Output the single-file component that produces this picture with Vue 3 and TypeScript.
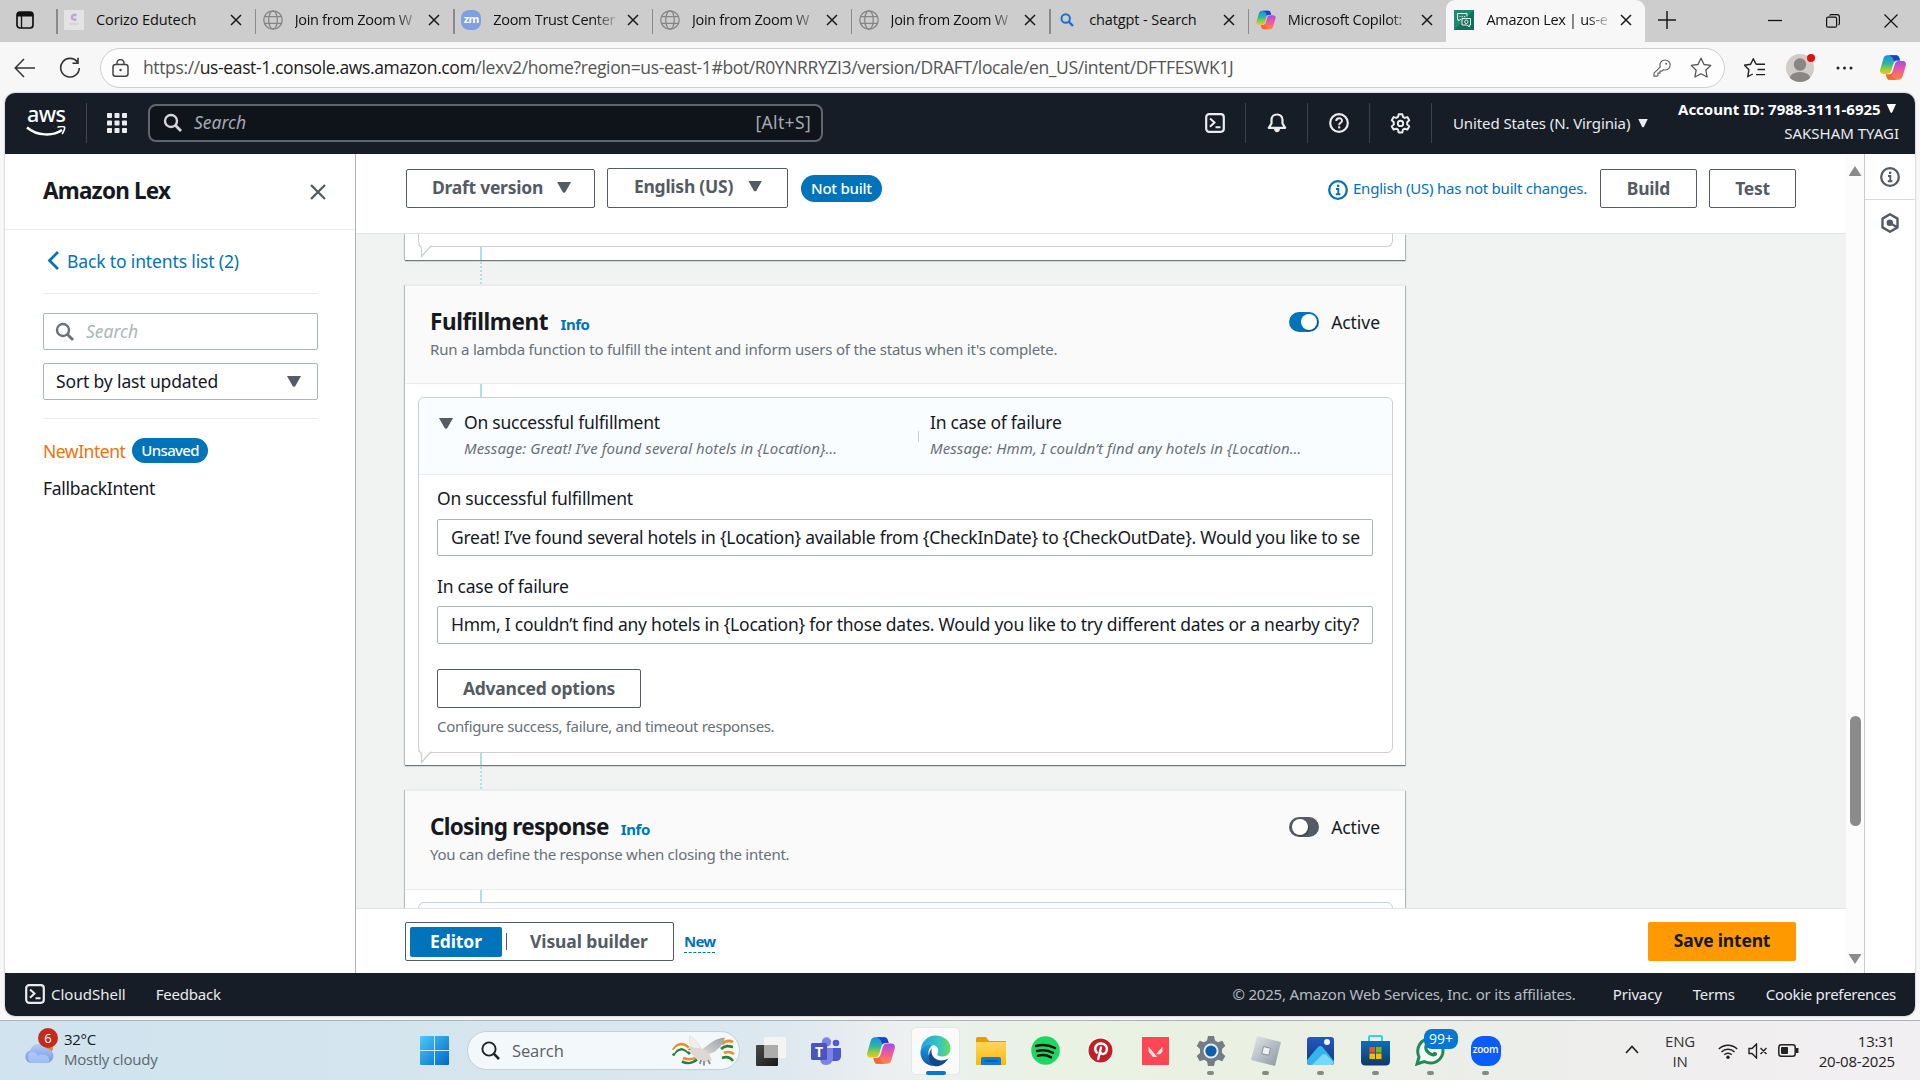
<script setup lang="ts">
interface Tab {
  title: string
  icon: 'corizo' | 'globe' | 'zm' | 'search' | 'copilot' | 'lex'
  fade?: boolean
  active?: boolean
}

const tabs: Tab[] = [
  { title: 'Corizo Edutech', icon: 'corizo' },
  { title: 'Join from Zoom W', icon: 'globe', fade: true },
  { title: 'Zoom Trust Center', icon: 'zm', fade: true },
  { title: 'Join from Zoom W', icon: 'globe', fade: true },
  { title: 'Join from Zoom W', icon: 'globe', fade: true },
  { title: 'chatgpt - Search', icon: 'search' },
  { title: 'Microsoft Copilot:', icon: 'copilot', fade: true },
  { title: 'Amazon Lex | us-e', icon: 'lex', fade: true, active: true },
]

const successText =
  'Great! I’ve found several hotels in {Location} available from {CheckInDate} to {CheckOutDate}. Would you like to se'
const failureText =
  'Hmm, I couldn’t find any hotels in {Location} for those dates. Would you like to try different dates or a nearby city?'

type App =
  | 'taskview' | 'teams' | 'copilot' | 'edge' | 'folder' | 'spotify' | 'pinterest'
  | 'valorant' | 'settings' | 'roblox' | 'photos' | 'store' | 'whatsapp' | 'zoom'

const apps: { id: App; state?: 'active' | 'running' }[] = [
  { id: 'taskview' },
  { id: 'teams' },
  { id: 'copilot' },
  { id: 'edge', state: 'active' },
  { id: 'folder' },
  { id: 'spotify' },
  { id: 'pinterest' },
  { id: 'valorant' },
  { id: 'settings', state: 'running' },
  { id: 'roblox', state: 'running' },
  { id: 'photos', state: 'running' },
  { id: 'store', state: 'running' },
  { id: 'whatsapp', state: 'running' },
  { id: 'zoom', state: 'running' },
]
</script>

<template>
  <div class="screen">
    <!-- shared gradients and symbols -->
    <svg class="defs" width="0" height="0">
      <defs>
        <linearGradient id="cpA" x1="0" y1="0" x2="0" y2="1">
          <stop offset="0" stop-color="#1a8fe8" /><stop offset=".45" stop-color="#2fb6a0" />
          <stop offset=".75" stop-color="#9ccc3c" /><stop offset="1" stop-color="#f5c518" />
        </linearGradient>
        <linearGradient id="cpB" x1="0" y1="0" x2="0" y2="1">
          <stop offset="0" stop-color="#a34fe8" /><stop offset=".5" stop-color="#ee5a9a" />
          <stop offset="1" stop-color="#ff8a3c" />
        </linearGradient>
        <linearGradient id="edgeA" x1="0" y1="0" x2="1" y2="0">
          <stop offset="0" stop-color="#1fa2e0" /><stop offset=".6" stop-color="#35c6c3" />
          <stop offset="1" stop-color="#66dd55" />
        </linearGradient>
        <linearGradient id="edgeB" x1="0" y1="0" x2="0" y2="1">
          <stop offset="0" stop-color="#1b9de2" /><stop offset="1" stop-color="#0c59a4" />
        </linearGradient>
        <linearGradient id="win" x1="0" y1="0" x2="1" y2="1">
          <stop offset="0" stop-color="#4cc9fa" /><stop offset="1" stop-color="#0067c8" />
        </linearGradient>
        <linearGradient id="cloud" x1="0" y1="0" x2="0" y2="1">
          <stop offset="0" stop-color="#b4cdf8" /><stop offset="1" stop-color="#6f9ae8" />
        </linearGradient>
        <linearGradient id="fold" x1="0" y1="0" x2="0" y2="1">
          <stop offset="0" stop-color="#ffd65c" /><stop offset="1" stop-color="#f8b90e" />
        </linearGradient>
        <linearGradient id="photo" x1="0" y1="0" x2="0" y2="1">
          <stop offset="0" stop-color="#2458c0" /><stop offset="1" stop-color="#103a82" />
        </linearGradient>
        <linearGradient id="storeG" x1="0" y1="0" x2="0" y2="1">
          <stop offset="0" stop-color="#0d6fb8" /><stop offset="1" stop-color="#12386b" />
        </linearGradient>
        <linearGradient id="silver" x1="0" y1="0" x2="1" y2="1">
          <stop offset="0" stop-color="#e4e8ec" /><stop offset="1" stop-color="#8b959f" />
        </linearGradient>
        <linearGradient id="dark" x1="0" y1="0" x2="1" y2="1">
          <stop offset="0" stop-color="#4a4a48" /><stop offset="1" stop-color="#191919" />
        </linearGradient>
        <linearGradient id="wing" x1="0" y1="1" x2="1" y2="0">
          <stop offset="0" stop-color="#e2ddd9" /><stop offset="1" stop-color="#9aa0aa" />
        </linearGradient>
        <symbol id="copilot" viewBox="0 0 28 28">
          <path d="M8.200 1.200h9.200c1.600 0 2.500 1 3 2.500l1 3.100h-3.300c-2 0-3 1-3.600 3l-2.300 7.600c-.7 2.300-2 3.400-4.200 3.400H4C1.500 20.800 0 19 .7 16.200L4 4.800C4.700 2.400 6 1.200 8.200 1.200z" fill="url(#cpA)" />
          <path d="M9 1.200h8.400c1.600 0 2.500 1 3 2.500l1 3.100h-3.300c-1.400 0-2.300.5-2.900 1.500C14.500 4.500 13 2 9 1.200z" fill="#1b44c4" />
          <path d="M19.800 26.800h-9.200c-1.600 0-2.500-1-3-2.500l-1-3.100h3.300c2 0 3-1 3.600-3l2.300-7.600c.7-2.300 2-3.400 4.200-3.400H24c2.500 0 4 1.800 3.300 4.600L24 23.200c-.7 2.400-2 3.600-4.200 3.600z" fill="url(#cpB)" />
          <path d="M19 26.800h-8.400c-1.600 0-2.500-1-3-2.500l-1-3.100h3.300c1.400 0 2.300-.5 2.900-1.500.7 3.800 2.200 6.300 6.200 7.100z" fill="#f46a32" />
        </symbol>
        <symbol id="globe" viewBox="0 0 20 20">
          <g fill="none" stroke="#858585" stroke-width="1.300">
            <circle cx="10" cy="10" r="9.200" /><ellipse cx="10" cy="10" rx="4.300" ry="9.200" />
            <path d="M1.500 6.700h17M1.500 13.300h17" />
          </g>
        </symbol>
        <symbol id="shell" viewBox="0 0 20 20">
          <rect x="1.200" y="1.200" width="17.600" height="17.600" rx="3" fill="none" stroke="currentColor" stroke-width="2.200" />
          <path d="M5 5.500l4.500 4-4.500 4.300M10.500 14.200h5" fill="none" stroke="currentColor" stroke-width="2" />
        </symbol>
        <symbol id="mag" viewBox="0 0 20 20">
          <circle cx="8" cy="8" r="6" fill="none" stroke="currentColor" stroke-width="2.400" />
          <path d="M12.300 12.300L18 18" stroke="currentColor" stroke-width="2.800" />
        </symbol>
        <symbol id="info" viewBox="0 0 20 20">
          <circle cx="10" cy="10" r="8.800" fill="none" stroke="currentColor" stroke-width="2.300" />
          <path d="M8 9h2.300v5M7.800 14.200h4.600" fill="none" stroke="currentColor" stroke-width="1.900" />
          <rect x="9" y="4.700" width="2.300" height="2.300" fill="currentColor" />
        </symbol>
        <symbol id="tail" viewBox="0 0 14 14">
          <path d="M0 0v4h14V0z" fill="#fff" />
          <path d="M.5 0C.5 1.500 3.500 2.500 3.500 4v8.500L12.500 2.500H14" fill="#fff" stroke="#ccd0d0" stroke-width="1.300" />
        </symbol>
      </defs>
    </svg>

    <!-- browser tabs -->
    <div class="tabbar">
      <div class="tab-actions">
        <svg width="18" height="18" viewBox="0 0 18 18"><rect x="1" y="1" width="16" height="16" rx="3" fill="none" stroke="#111" stroke-width="1.700" /><path d="M1 3.500C1 1.500 2 1 4 1h10c2 0 3 1 3 2.500V5.500H1z" fill="#111" /><path d="M5.500 5v12" stroke="#111" stroke-width="1.300" /></svg>
      </div>
      <div v-for="(tab, i) in tabs" :key="i" class="tab" :class="{ active: tab.active }">
        <span class="favicon">
          <svg v-if="tab.icon === 'corizo'" width="20" height="20"><rect width="20" height="20" fill="#e3e3e3" /><path d="M12.500 5.500c-2.500-1.500-5 0-4.500 2.300S10 9.800 12.500 9.500" fill="none" stroke="#b9a6d6" stroke-width="2.500" /><path d="M5 14h10" stroke="#c9c3d2" /></svg>
          <svg v-else-if="tab.icon === 'globe'" width="20" height="20"><use href="#globe" /></svg>
          <span v-else-if="tab.icon === 'zm'" class="zm">zm</span>
          <svg v-else-if="tab.icon === 'search'" width="14" height="14" viewBox="0 0 14 14"><circle cx="5.700" cy="5.500" r="4.200" fill="none" stroke="#1672d0" stroke-width="2" /><path d="M8.700 8.700L13 13" stroke="#1672d0" stroke-width="2.400" /></svg>
          <svg v-else-if="tab.icon === 'copilot'" width="20" height="20"><use href="#copilot" /></svg>
          <svg v-else width="20" height="20"><rect width="20" height="20" fill="#1f8a70" /><path d="M0 20L20 0v20z" fill="#12705a" /><g fill="none" stroke="#e8f5f1" stroke-width="1"><path d="M7 9.500H6L4.500 11V9.500h-1v-6h9.500v3" /><path d="M5.500 6.500h1M7.800 6.500h1M10 6.500h1" /><path d="M8 8.500h8.500v6.500H15.200v2l-2-2H8z" /><circle cx="12.300" cy="11.800" r="1.700" /></g></svg>
        </span>
        <span class="tab-title" :class="{ fade: tab.fade }">{{ tab.title }}</span>
        <svg class="tab-close" width="12" height="12" viewBox="0 0 12 12"><path d="M1 1l10 10M11 1L1 11" stroke="#1a1a1a" stroke-width="1.500" /></svg>
      </div>
      <svg class="new-tab" width="18" height="18" viewBox="0 0 18 18"><path d="M9 0v18M0 9h18" stroke="#1a1a1a" stroke-width="1.500" /></svg>
      <div class="win-controls">
        <svg width="14" height="14" viewBox="0 0 14 14"><path d="M0 6.500h14" stroke="#111" stroke-width="1.300" /></svg>
        <svg width="14" height="14" viewBox="0 0 14 14"><rect x=".6" y="3.200" width="10" height="10" rx="1.500" fill="none" stroke="#111" stroke-width="1.200" /><path d="M3.500 1.500C4 .8 4.600.6 5.500.6H11c1.500 0 2.400 1 2.400 2.400V9c0 .9-.2 1.500-.9 2" fill="none" stroke="#111" stroke-width="1.200" /></svg>
        <svg width="14" height="14" viewBox="0 0 14 14"><path d="M.5.5l13 13M13.500.5l-13 13" stroke="#111" stroke-width="1.200" /></svg>
      </div>
    </div>

    <!-- address bar -->
    <div class="toolbar">
      <svg class="back" width="22" height="20" viewBox="0 0 22 20"><path d="M21 10H1.500M10 1L1.200 10l8.800 9" fill="none" stroke="#333" stroke-width="1.500" /></svg>
      <svg class="reload" width="22" height="22" viewBox="0 0 22 22"><path d="M18.500 5.200A9.300 9.300 0 1 0 20.300 11M19 .8v5.400h-5.500" fill="none" stroke="#333" stroke-width="1.600" /></svg>
      <div class="address">
        <svg class="lock" width="17" height="18" viewBox="0 0 17 18"><rect x="1" y="5.500" width="15" height="11.700" rx="2.500" fill="none" stroke="#444" stroke-width="1.500" /><path d="M5 5.500V4a3.500 3.500 0 0 1 7 0v1.500" fill="none" stroke="#444" stroke-width="1.500" /><circle cx="8.500" cy="11" r="1.200" fill="#444" /></svg>
        <span class="url">https://<b>us-east-1.console.aws.amazon.com</b>/lexv2/home?region=us-east-1#bot/R0YNRRYZI3/version/DRAFT/locale/en_US/intent/DFTFESWK1J</span>
        <svg class="key" width="18" height="18" viewBox="0 0 18 18"><path d="M12 1a5 5 0 1 1-1.600 9.700L8.800 12.200H7v2H5v2L4 17.200H1v-3l6.300-6.400A5 5 0 0 1 12 1z" fill="none" stroke="#666" stroke-width="1.200" /><circle cx="13.200" cy="4.800" r="1" fill="#666" /></svg>
        <svg class="star" width="22" height="21" viewBox="0 0 22 21"><path d="M11 1.200l3 6.300 6.800.9-5 4.800 1.300 6.800-6.100-3.300L4.900 20l1.300-6.800-5-4.800 6.800-.9z" fill="none" stroke="#555" stroke-width="1.300" stroke-linejoin="round" /></svg>
      </div>
      <svg class="favs" width="22" height="20" viewBox="0 0 22 20"><path d="M12.200 6.300L9.300.9 6.500 6.300l-6 .9 4.400 4.500L3.800 18.600l5-2.600M12.200 6.300h8.800M13.500 11.500H21M12 16.600h9" fill="none" stroke="#222" stroke-width="1.400" /></svg>
      <div class="avatar">
        <svg width="28" height="28" viewBox="0 0 28 28"><clipPath id="av"><circle cx="14" cy="14" r="14" /></clipPath><g clip-path="url(#av)"><rect width="28" height="28" fill="#cfccc9" /><circle cx="14" cy="10.500" r="6.200" fill="#8a8683" /><ellipse cx="14" cy="24" rx="10.200" ry="6" fill="#8a8683" /></g></svg>
        <i class="alert" />
      </div>
      <svg class="more" width="17" height="4" viewBox="0 0 17 4"><g fill="#222"><circle cx="2" cy="2" r="1.500" /><circle cx="8.500" cy="2" r="1.500" /><circle cx="15" cy="2" r="1.500" /></g></svg>
      <svg class="cp" width="28" height="27"><use href="#copilot" /></svg>
    </div>

    <!-- console page -->
    <div class="page">
      <header class="nav">
        <div class="aws">
          <span>aws</span>
          <svg width="40" height="12" viewBox="0 0 40 12"><path d="M1 1.500C11 10 27 10.500 36 4" fill="none" stroke="#fff" stroke-width="2.400" /><path d="M31.500 1.200c3-.9 6.500-.8 7 0s-.5 4.500-2.500 6.800" fill="none" stroke="#fff" stroke-width="1.600" /></svg>
        </div>
        <svg class="grid" width="20" height="20" viewBox="0 0 20 20"><g fill="#ebebf0"><template v-for="r in 3" :key="r"><rect v-for="c in 3" :key="c" :x="(c - 1) * 7.5" :y="(r - 1) * 7.5" width="5" height="5" rx=".8" /></template></g></svg>
        <div class="nav-search">
          <svg width="20" height="20"><use href="#mag" /></svg>
          <em>Search</em>
          <span class="kbd">[Alt+S]</span>
        </div>
        <div class="nav-icons">
          <span><svg width="20" height="20"><use href="#shell" /></svg></span>
          <span><svg width="20" height="20" viewBox="0 0 20 20"><path d="M10 1.500c-3.500 0-5.500 2.400-5.500 5.500v3.500L1.800 14.800h16.400L15.500 10.500V7c0-3.100-2-5.500-5.500-5.500z" fill="none" stroke="currentColor" stroke-width="2.200" stroke-linejoin="round" /><path d="M7 15.500c0 5 6 5 6 0z" fill="currentColor" /></svg></span>
          <span><svg width="20" height="20" viewBox="0 0 20 20"><circle cx="10" cy="10" r="8.800" fill="none" stroke="currentColor" stroke-width="2.200" /><path d="M7.200 8c0-3.800 5.800-3.500 5.800-.3 0 2.200-2.900 2-2.900 4.500" fill="none" stroke="currentColor" stroke-width="1.900" /><rect x="9.100" y="13.300" width="2.100" height="2.100" fill="currentColor" /></svg></span>
          <span><svg width="21" height="21" viewBox="0 0 21 21"><path d="M8.700 1.200h3.600l.7 2.700 1.700 1 2.700-.8 1.800 3.100-2 2v2.200l2 2-1.800 3.100-2.700-.8-1.700 1-.7 2.700H8.700L8 16.700l-1.700-1-2.700.8-1.800-3.100 2-2V9.200l-2-2 1.800-3.100 2.700.8 1.700-1z" fill="none" stroke="currentColor" stroke-width="2" stroke-linejoin="round" /><circle cx="10.500" cy="10.400" r="2.700" fill="none" stroke="currentColor" stroke-width="1.900" /></svg></span>
        </div>
        <div class="region">United States (N. Virginia)<i class="tri" /></div>
        <div class="account">
          <div class="acc-id">Account ID: 7988-3111-6925<i class="tri" /></div>
          <div class="acc-name">SAKSHAM TYAGI</div>
        </div>
      </header>

      <div class="body">
        <aside class="side">
          <div class="side-head">
            <h2>Amazon Lex</h2>
            <svg width="16" height="16" viewBox="0 0 16 16"><path d="M1 1l14 14M15 1L1 15" stroke="#545b64" stroke-width="2.300" /></svg>
          </div>
          <div class="side-body">
            <a class="backlink"><svg width="11" height="19" viewBox="0 0 11 19"><path d="M10 1L1.500 9.500 10 18" fill="none" stroke="#0073bb" stroke-width="2.700" /></svg>Back to intents list (2)</a>
            <div class="field"><svg width="20" height="20"><use href="#mag" /></svg><em>Search</em></div>
            <div class="field select"><span>Sort by last updated</span><i class="tri" /></div>
            <div class="intents">
              <div class="intent current">NewIntent<span class="badge">Unsaved</span></div>
              <div class="intent">FallbackIntent</div>
            </div>
          </div>
        </aside>

        <main class="main">
          <div class="topbar">
            <button class="btn draft">Draft version<i class="tri" /></button>
            <button class="btn lang">English (US)<i class="tri" /></button>
            <span class="badge built">Not built</span>
            <span class="notice"><svg width="20" height="20"><use href="#info" /></svg>English (US) has not built changes.</span>
            <button class="btn build">Build</button>
            <button class="btn test">Test</button>
          </div>

          <div class="canvas">
            <section class="card prev">
              <div class="bubble"><svg class="tail" width="14" height="14"><use href="#tail" /></svg></div>
              <i class="stem" />
            </section>
            <div class="gap" />
            <section class="card">
              <div class="card-head">
                <div>
                  <h3>Fulfillment <a>Info</a></h3>
                  <p>Run a lambda function to fulfill the intent and inform users of the status when it's complete.</p>
                </div>
                <div class="toggle on"><i />Active</div>
              </div>
              <i class="stem" />
              <div class="bubble full">
                <div class="bubble-head">
                  <i class="tri" />
                  <div class="summary first"><div>On successful fulfillment</div><em>Message: Great! I’ve found several hotels in {Location}…</em></div>
                  <i class="bar" />
                  <div class="summary second"><div>In case of failure</div><em>Message: Hmm, I couldn’t find any hotels in {Location…</em></div>
                </div>
                <div class="form">
                  <label>On successful fulfillment</label>
                  <div class="input"><span>{{ successText }}</span></div>
                  <label class="second">In case of failure</label>
                  <div class="input fail"><span>{{ failureText }}</span></div>
                  <button class="btn adv">Advanced options</button>
                  <p>Configure success, failure, and timeout responses.</p>
                </div>
                <svg class="tail" width="14" height="14"><use href="#tail" /></svg>
              </div>
              <i class="stem short" />
            </section>
            <div class="gap" />
            <section class="card">
              <div class="card-head closing">
                <div>
                  <h3>Closing response <a>Info</a></h3>
                  <p>You can define the response when closing the intent.</p>
                </div>
                <div class="toggle"><i />Active</div>
              </div>
              <i class="stem short" />
              <div class="bubble next" />
            </section>
          </div>

          <div class="bottombar">
            <div class="segmented"><span class="sel">Editor</span><i /><span class="alt">Visual builder</span></div>
            <span class="new">New</span>
            <button class="save">Save intent</button>
          </div>
        </main>

        <div class="scroll">
          <i class="up" /><i class="thumb" /><i class="down" />
        </div>
        <div class="rail">
          <span><svg width="20" height="20"><use href="#info" /></svg></span>
          <span><svg width="20" height="20" viewBox="0 0 20 20"><path d="M10 1.200l7.500 4.400v8.800L10 18.800l-7.500-4.400V5.600z" fill="none" stroke="currentColor" stroke-width="2.400" stroke-linejoin="round" /><circle cx="9.800" cy="9.800" r="3.200" fill="currentColor" /><path d="M10 10l7.500 4.600" stroke="currentColor" stroke-width="2.400" /></svg></span>
        </div>
      </div>

      <footer class="foot">
        <svg width="20" height="20"><use href="#shell" /></svg>
        <span class="f1">CloudShell</span><span class="f2">Feedback</span>
        <span class="copy">© 2025, Amazon Web Services, Inc. or its affiliates.</span>
        <span class="f3">Privacy</span><span class="f4">Terms</span><span class="f5">Cookie preferences</span>
      </footer>
    </div>

    <!-- taskbar -->
    <div class="taskbar">
      <div class="weather">
        <div class="w-icon">
          <svg width="32" height="24" viewBox="0 0 32 24"><circle cx="23" cy="7" r="6" fill="#f58220" /><path d="M7 22a6.500 6.500 0 0 1-.5-12.800A8.500 8.500 0 0 1 22.500 7.500 7.400 7.400 0 0 1 24 22z" fill="url(#cloud)" /><path d="M7 22a6.500 6.500 0 0 1 0-11c4 0 6 2 7 4 3-2 8-2 10 1 2 2 1.500 5 0 6z" fill="#c5d8fb" opacity=".55" /></svg>
          <b>6</b>
        </div>
        <div class="w-text"><span>32°C</span><small>Mostly cloudy</small></div>
      </div>
      <svg class="start" width="29" height="29" viewBox="0 0 29 29"><path d="M0 1a1 1 0 0 1 1-1h13v14H0zM15 0h13a1 1 0 0 1 1 1v13H15zM0 15h14v14H1a1 1 0 0 1-1-1zM15 15h14v13a1 1 0 0 1-1 1H15z" fill="url(#win)" /></svg>
      <div class="t-search">
        <svg width="19" height="19" viewBox="0 0 19 19"><circle cx="8" cy="8" r="6.600" fill="none" stroke="#222" stroke-width="1.900" /><path d="M12.700 12.700L18 18" stroke="#222" stroke-width="2.500" /></svg>
        <span>Search</span>
        <svg class="dove" width="63" height="32" viewBox="0 0 63 32">
          <g fill="none" stroke-width="2.600">
            <path d="M1 15C6 7 12 8 17 13" stroke="#ef8b2f" /><path d="M1 20.500C6 12 12 13 18 19" stroke="#2a7f3c" /><path d="M1 17.800C6 9.500 12 10.500 17 16" stroke="#fbfbf8" />
            <path d="M11 23c5 2 9 2 14-1" stroke="#ef8b2f" /><path d="M10 26.500c6 3 10 2 15-2" stroke="#2a7f3c" />
            <path d="M50 9c4-4 7-4 11-2" stroke="#ef8b2f" /><path d="M49 14c4-4 8-3 12-2" stroke="#2a7f3c" />
            <path d="M52 18c4-2 7-1 10 1" stroke="#ef8b2f" /><path d="M50 23c5-2 8-1 11 3" stroke="#2a7f3c" />
          </g>
          <path d="M25 17C34 14 40 3 53 2.500c-1 2-1 4-2.500 6-1 2-2.500 4-5 5.500-2 3-5 4-9 5z" fill="url(#wing)" />
          <path d="M15.500 14.500c.5-2 2-3.200 4-2.500C17.500 8 16 4 17.500.5c6 3 9 8 12 13 3 1 6 3 8 6 1 2 2 4 2.500 6.500L36 24.500l-2.500 3-2.500-2.500C23 25 20 20 18.500 15.500z" fill="#ddd8d4" />
          <path d="M20 12C18 8 17 4 17.500.5c5 3 8 7 10.500 12-2 1-5 1-8-.5z" fill="#f1efec" />
          <path d="M29 25l-1 4M32 26v4.500M36 25l2 4" stroke="#8d8790" stroke-width="1.800" />
          <path d="M15.500 14.500l3-1v2z" fill="#d9743c" />
        </svg>
      </div>
      <div class="apps">
        <div v-for="app in apps" :key="app.id" class="app" :class="[app.state, app.id]">
          <svg v-if="app.id === 'taskview'" width="30" height="30" viewBox="0 0 30 30"><rect x="0" y="9" width="22" height="21" rx="1" fill="url(#dark)" /><rect x="8" y="1" width="22" height="21" rx="1" fill="#f4f4f2" /><rect x="8" y="9" width="14" height="13" fill="#adadab" /></svg>
          <svg v-else-if="app.id === 'teams'" width="30" height="28" viewBox="0 0 30 28"><circle cx="15.500" cy="5" r="4.700" fill="#7b83eb" /><circle cx="25" cy="6" r="3.300" fill="#5059c9" /><path d="M20 11h9c.6 0 1 .4 1 1v7c0 3-2 5-5 5h-5z" fill="#5059c9" /><path d="M9 11h13v9c0 4.500-2.500 8-7 8s-6-3-6-8z" fill="#7b83eb" /><rect x="0" y="6" width="16" height="17" rx="1.500" fill="#4b53bc" /><text x="8" y="19.500" text-anchor="middle" font-size="14" font-weight="700" fill="#fff">T</text></svg>
          <svg v-else-if="app.id === 'copilot'" width="30" height="29"><use href="#copilot" /></svg>
          <svg v-else-if="app.id === 'edge'" width="31" height="32" viewBox="0 0 31 32"><path d="M.8 15C1.500 6 8 .5 15.500.5 24 .5 30.500 6 30.500 13.500c0 4.500-3.500 8-8 8-3.500 0-6-1-5-3 1.500-2.500 1-7.500-4.500-8.500C7 9 2.500 11.500.8 15z" fill="url(#edgeA)" /><path d="M.5 16C2 11 7.500 8.500 13 10c-3.500 2-5.500 6-4 11 1.500 5.500 7 8.500 12 7.500-3 2.500-8 3-12 1.500C3.500 28 0 22.500.5 16z" fill="url(#edgeB)" /><path d="M12 13c-2 5 1 12 9 12.500 3 0 5-.8 7.300-2C25 29 20 31.800 15 31.300 8 29 7 19 12 13z" fill="#114a8b" /></svg>
          <svg v-else-if="app.id === 'folder'" width="30" height="28" viewBox="0 0 30 28"><path d="M0 2C0 .8.800 0 2 0h8l3 4h17v8H0z" fill="#e2a000" /><rect y="5" width="30" height="23" rx="1" fill="url(#fold)" /><path d="M5 28v-6c0-1.200.8-2 2-2h16c1.200 0 2 .8 2 2v6z" fill="#1379d2" /><path d="M8.500 24h13" stroke="#0b4f9e" stroke-width="1.300" /></svg>
          <svg v-else-if="app.id === 'spotify'" width="29" height="29" viewBox="0 0 29 29"><circle cx="14.500" cy="14.500" r="14.300" fill="#1ed760" /><path d="M5 10c6.500-1.800 13-1.200 19 2M6 15c5.500-1.500 11-.9 16 1.800M7 19.700c4.500-1.200 9-.7 13 1.600" fill="none" stroke="#121212" stroke-width="2.500" stroke-linecap="round" /></svg>
          <svg v-else-if="app.id === 'pinterest'" width="27" height="27" viewBox="0 0 27 27"><circle cx="13.500" cy="13.500" r="13" fill="#fff" /><circle cx="13.500" cy="13.500" r="12" fill="#c11f28" /><path d="M9.700 15.500C6 11 9.500 6.500 14 6.500s6.800 3.500 5.600 7.300c-1 3.500-4.800 4.300-6 1.700M14 10.500l-2.800 11.500" fill="none" stroke="#fff" stroke-width="2.400" stroke-linecap="round" /></svg>
          <svg v-else-if="app.id === 'valorant'" width="27" height="28" viewBox="0 0 27 28"><rect width="27" height="28" fill="#ff4655" /><path d="M6.500 9.500l8.700 10.500h-4.200l-4.500-5.500zM20.500 9.500v5l-2.300 2.800h-4z" fill="#f6e9df" /></svg>
          <svg v-else-if="app.id === 'settings'" width="30" height="30" viewBox="0 0 30 30"><path d="M12 0h6l1 4.500 3 1.700 4.300-1.500 3 5.300-3.300 3v4l3.300 3-3 5.300-4.300-1.500-3 1.700L18 30h-6l-1-4.500-3-1.700-4.300 1.500-3-5.300L4 17v-4L.7 10l3-5.300L8 6.200l3-1.700z" fill="#757c84" /><circle cx="15" cy="15" r="7.500" fill="#e2f1fa" /><circle cx="15" cy="15" r="5.600" fill="#0f5fae" /></svg>
          <svg v-else-if="app.id === 'roblox'" width="30" height="30" viewBox="0 0 30 30"><path d="M6 0l24 6-6 24-24-6z" fill="url(#silver)" /><path d="M12.500 10.500l7 1.800-1.800 7-7-1.800z" fill="#eef0f2" stroke="#88929b" /></svg>
          <svg v-else-if="app.id === 'photos'" width="27" height="28" viewBox="0 0 27 28"><rect width="27" height="28" rx="3" fill="url(#photo)" /><circle cx="20" cy="5" r="3" fill="#f3f4fb" /><path d="M0 23L11 10c1.500-1.500 3-1.500 4.500 0L27 24v1c0 2-1 3-3 3H3c-2 0-3-1-3-3z" fill="#35b3ee" /><path d="M5 28l10-10c1.500-1.500 3-1.500 4.500 0l7 7.500c-.3 1.500-1.200 2.500-2.500 2.500z" fill="#7bd7f9" /></svg>
          <svg v-else-if="app.id === 'store'" width="29" height="31" viewBox="0 0 29 31"><path d="M8 6V2c0-.7.300-1 1-1h11c.7 0 1 .3 1 1v4" fill="none" stroke="#3ccbf4" stroke-width="2" /><path d="M0 6h29v20c0 3-1.500 4.500-4.500 4.500h-20C1.500 30.500 0 29 0 26z" fill="url(#storeG)" /><path d="M8.500 12h5.500v5.500H8.500z" fill="#f25022" /><path d="M15 12h5.500v5.500H15z" fill="#7fba00" /><path d="M8.500 18.500h5.500V24H8.500z" fill="#ffb900" /><path d="M15 18.500h5.500V24H15z" fill="#ffb900" /></svg>
          <template v-else-if="app.id === 'whatsapp'">
            <svg width="31" height="30" viewBox="0 0 31 30"><path d="M2 28l2-7C0 12 6 2.500 15.500 2.500c7 0 12.500 5.500 12.500 12.300S22.500 27 15.500 27c-2.300 0-4.400-.6-6.300-1.500z" fill="#f3faf5" stroke="#1f8b54" stroke-width="3" /><path d="M9.500 9.500c1.500-2.500 3-1.500 3.500.5.500 1.500-.8 2-.5 2.800 1 2 2.500 3.200 4.500 4.200 1 .3 1.500-1.500 2.500-1.300 2 .8 3.200 1.300 2.500 2.800C19.500 24 7 17 9.500 9.500z" fill="#1f8b54" /></svg>
            <b class="count">99+</b>
          </template>
          <span v-else class="zoomapp">zoom</span>
        </div>
      </div>
      <div class="tray">
        <svg class="chev" width="14" height="9" viewBox="0 0 14 9"><path d="M1 8l6-6.500L13 8" fill="none" stroke="#222" stroke-width="1.700" /></svg>
        <div class="lang-ind"><span>ENG</span><span>IN</span></div>
        <svg class="wifi" width="20" height="16" viewBox="0 0 20 16"><g fill="none" stroke="#222" stroke-width="1.500"><path d="M.8 6a13 13 0 0 1 18.400 0M3.500 9a9.200 9.200 0 0 1 13 0M6.300 11.800a5.300 5.300 0 0 1 7.400 0" /></g><circle cx="10" cy="14.200" r="1.700" fill="#222" /></svg>
        <svg class="mute" width="20" height="16" viewBox="0 0 20 16"><path d="M1 5.500h3L8.500 1v14L4 10.500H1zM12.500 5l6 6M18.500 5l-6 6" fill="none" stroke="#222" stroke-width="1.400" /></svg>
        <svg class="batt" width="21" height="13" viewBox="0 0 21 13"><rect x=".8" y=".8" width="16.400" height="11.400" rx="2.500" fill="none" stroke="#222" stroke-width="1.500" /><rect x="3" y="3" width="7" height="7" rx="1" fill="#222" /><path d="M19.200 4v5" stroke="#222" stroke-width="2.500" /></svg>
        <div class="clock"><span>13:31</span><span>20-08-2025</span></div>
      </div>
    </div>
  </div>
</template>

<style>
body {
  margin: 0;
  overflow: hidden;
}
</style>

<style scoped>
.screen {
  --ember: "Noto Sans", "Open Sans", sans-serif;
  width: 1920px;
  height: 1080px;
  display: flex;
  flex-direction: column;
  background: #f7f7f7;
  font-family: "Open Sans", "Noto Sans", sans-serif;
  font-stretch: 90%;
  color: #16191f;
  overflow: hidden;
}
.screen * { box-sizing: border-box; }
svg { display: block; flex: none; }
.defs { position: absolute; }
button { font: inherit; margin: 0; padding: 0; }

/* tabs */
.tabbar { height: 42px; display: flex; background: #cdcdcd; flex: none; }
.tab-actions { width: 56px; padding: 11px 0 0 16px; }
.tab { width: 198.650px; height: 42px; display: flex; align-items: center; padding: 0 13px 2px 8px; position: relative; }
.tab::before { content: ""; position: absolute; left: 0; top: 9px; width: 1.500px; height: 25px; background: #8a8a8a; }
.tab.active { background: #f7f7f7; border-radius: 9px 9px 0 0; }
.tab.active::before { display: none; }
.favicon { width: 20px; height: 20px; display: flex; align-items: center; justify-content: center; margin-right: 12px; }
.zm { width: 20px; height: 20px; border-radius: 8px; background: #7f9fe0; color: #fff; font-size: 11px; font-weight: 700; line-height: 18px; text-align: center; letter-spacing: -.5px; }
.tab-title { width: 126px; font-size: 14.500px; line-height: 24px; letter-spacing: -.1px; white-space: nowrap; color: #111; }
.tab-title.fade { letter-spacing: -.3px; mask-image: linear-gradient(90deg, #000 80%, #0003 97%); }
.tab-close { margin-left: 8px; }
.new-tab { margin: 11px 0 0 13px; }
.win-controls { margin-left: auto; display: flex; gap: 44px; padding: 14px 22px 0 0; }

/* toolbar */
.toolbar { height: 51px; flex: none; display: flex; align-items: center; background: #f7f7f7; }
.back { margin-left: 14px; }
.reload { margin-left: 23px; }
.address { margin-left: 19px; width: 1625px; height: 40px; border: 1px solid #cfcfcf; border-radius: 20px; background: #fdfdfd; display: flex; align-items: center; padding-left: 11px; }
.url { margin-left: 14px; width: 1510px; font-size: 17.500px; letter-spacing: -.37px; white-space: nowrap; color: #555; padding-bottom: 2px; }
.url b { font-weight: 400; color: #1b1b1b; }
.star { margin-left: 19px; }
.favs { margin-left: 19px; }
.avatar { position: relative; margin-left: 20px; }
.alert { position: absolute; right: -1px; top: 0; width: 8px; height: 8px; border-radius: 50%; background: #e11010; }
.more { margin-left: 22px; }
.cp { margin-left: 26px; }

/* console frame */
.page { margin: 0 5px; height: 923px; flex: none; display: flex; flex-direction: column; border-radius: 10px; overflow: hidden; background: #fff; font-family: var(--ember); font-stretch: 87%; box-shadow: 0 0 2px #999; }
.tri { display: inline-block; width: 14px; height: 11px; background: currentColor; clip-path: polygon(0 0, 100% 0, 60% 92%, 50% 100%, 40% 92%); }
.nav { height: 61px; flex: none; background: #161d26; display: flex; align-items: center; color: #ebebf0; padding-bottom: 1px; }
.aws { width: 82px; height: 40px; border-right: 1px solid #424650; padding-left: 21px; display: flex; flex-direction: column; }
.aws span { font-size: 21.500px; line-height: 18px; margin-top: 2px; padding-left: 1px; font-weight: 500; letter-spacing: -.6px; color: #fff; }
.aws svg { margin-top: 3px; }
.grid { margin-left: 20px; }
.nav-search { margin-left: 21px; width: 675px; height: 38px; border: 2px solid #5f6672; border-radius: 8px; background: #0f141a; display: flex; align-items: center; padding: 0 10px 0 13px; color: #d5d5da; }
.nav-search em { margin: 0 0 2px 11px; font-size: 17.500px; color: #a4a9b3; }
.kbd { margin: 0 0 2px auto; font-size: 17.500px; letter-spacing: .35px; color: #a4a9b3; }
.nav-icons { margin-left: auto; display: flex; }
.nav-icons span { width: 62px; height: 40px; display: flex; align-items: center; justify-content: center; border-right: 1px solid #3a414c; }
.region { margin-left: 21px; font-size: 15px; letter-spacing: -.1px; white-space: nowrap; display: flex; align-items: center; width: 195px; justify-content: space-between; }
.region .tri, .acc-id .tri { width: 10px; height: 9px; }
.account { margin-left: 30px; width: 221px; text-align: right; margin-right: 16px; font-size: 15px; line-height: 24px; white-space: nowrap; }
.acc-id { font-weight: 700; color: #fff; display: flex; align-items: center; justify-content: flex-end; gap: 6px; padding-right: 3px; margin-top: -5px; }

.body { flex: 1; min-height: 0; display: flex; }
.side { width: 351px; border-right: 1px solid #aab7b8; letter-spacing: -.14px; }
.side-head { height: 76px; border-bottom: 1px solid #eaeded; padding: 0 29px 0 38px; display: flex; align-items: center; justify-content: space-between; }
.side h2 { margin: 0; font-size: 22.500px; line-height: 28px; font-weight: 700; letter-spacing: -.8px; padding-bottom: 1px; }
.side-body { padding: 0 37px 0 38px; }
.backlink { display: flex; align-items: center; height: 64px; border-bottom: 1px solid #eaeded; padding: 0 0 2px 5px; gap: 8px; color: #0073bb; font-size: 17.500px; }
.field { margin-top: 19px; height: 37px; border: 1px solid #aab7b8; border-radius: 2px; display: flex; align-items: center; padding: 0 12px; font-size: 17.500px; }
.field svg { color: #687078; margin-left: -1px; }
.field em { margin: 0 0 2px 11px; color: #aab7b8; letter-spacing: 0; }
.field span { margin-bottom: 2px; }
.field.select { margin-top: 13px; justify-content: space-between; padding-right: 16px; }
.field .tri, .btn .tri, .bubble-head .tri { color: #545b64; }
.intents { margin-top: 18px; border-top: 1px solid #eaeded; padding-top: 18px; }
.intent { height: 27px; font-size: 17.500px; line-height: 26px; letter-spacing: -.3px; display: flex; align-items: center; margin-bottom: 10px; }
.current { color: #ec7211; letter-spacing: -.48px; }
.badge { background: #0073bb; color: #fff; border-radius: 14px; height: 25px; line-height: 25px; font-size: 15px; font-weight: 500; padding: 0 9px; margin-left: 7px; letter-spacing: -.65px; white-space: nowrap; }

.main { width: 1490px; display: flex; flex-direction: column; letter-spacing: -.24px; }
.topbar { height: 80px; flex: none; border-bottom: 1px solid #e3e6e6; display: flex; align-items: flex-start; padding: 15px 50px 0; }
.btn { height: 39px; border: 1px solid #545b64; border-radius: 2px; background: #fff; color: #545b64; font-weight: 700; font-size: 17.500px; line-height: 35px; letter-spacing: -.24px; white-space: nowrap; }
.draft, .lang { display: flex; align-items: center; justify-content: center; gap: 14px; }
.draft { width: 189px; padding: 0 0 2px 2px; }
.lang { width: 181px; height: 40px; margin: -1px 0 0 12px; padding: 0 0 4px 1px; gap: 15px; }
.built { margin: 6px 0 0 13px; height: 27px; line-height: 27px; padding: 0 10px; letter-spacing: -.25px; }
.notice { margin-left: auto; display: flex; gap: 5px; align-items: center; margin-top: 9px; color: #0073bb; font-size: 15px; letter-spacing: -.23px; line-height: 20px; white-space: nowrap; }
.notice svg { position: relative; top: 2px; }
.build { width: 97px; margin-left: 13px; }
.test { width: 87px; margin-left: 12px; }

.canvas { height: 674px; flex: none; overflow: hidden; background: #f1f3f3; padding-left: 49px; }
.card { width: 1000px; background: #fff; box-shadow: 0 1px 1px 0 #6d7a80, 1px 1px 1px 0 #bcc4c6, -1px 0 1px 0 #c5cbcc; }
.prev { height: 26px; }
.bubble { position: relative; margin: 0 13px; width: 975px; border: 1px solid #ccd0d0; border-radius: 6px; }
.prev .bubble { height: 13px; border-top: 0; border-radius: 0 0 6px 6px; }
.tail { position: absolute; left: -1px; bottom: -12px; }
.stem { display: block; width: 2px; height: 13px; margin-left: 75px; background: #b0dfe5; }
.stem.short { height: 12px; }
.gap { height: 25px; margin-left: 75px; width: 2px; background: repeating-linear-gradient(180deg, transparent 0 2px, #b0dfe5 2px 4px); }
.card-head { height: 99px; background: #fafafa; border-bottom: 1px solid #eaeded; border-top: 1px solid #eaeded; display: flex; justify-content: space-between; padding: 21px 25px 0 25px; }
.card-head.closing { height: 100px; }
.card-head h3 { margin: 0; font-size: 22.500px; line-height: 30px; font-weight: 700; white-space: nowrap; letter-spacing: -.38px; }
.card-head.closing h3 { letter-spacing: -.7px; }
.card-head h3 a { font-size: 15px; color: #0073bb; margin-left: 7px; letter-spacing: -.45px; }
.card-head p { margin: -1px 0 0; font-size: 15px; line-height: 22px; letter-spacing: -.2px; color: #687078; white-space: nowrap; }
.card-head.closing p { letter-spacing: -.24px; }
.toggle { display: flex; align-items: center; gap: 12px; height: 30px; font-size: 17.500px; letter-spacing: -.05px; }
.toggle i { width: 30px; height: 20px; border-radius: 10px; background: #545b64; padding: 2px 3px; display: flex; }
.toggle i::after { content: ""; width: 16px; height: 16px; border-radius: 50%; background: #fff; box-shadow: 1px 1px 1px #0005; }
.toggle.on i { background: #0073bb; justify-content: flex-end; padding-right: 2px; }
.full { height: 356px; }
.bubble-head { height: 77px; background: #fafdff; border-bottom: 1px solid #eaeded; border-radius: 6px 6px 0 0; display: flex; padding-left: 20px; }
.bubble-head > .tri { margin-top: 20px; }
.summary { font-size: 17.500px; line-height: 26px; padding-top: 11px; white-space: nowrap; }
.summary em { display: block; font-size: 15px; letter-spacing: .08px; color: #687078; }
.summary.first { margin-left: 11px; width: 454px; }
.bar { width: 1px; height: 11px; margin-top: 33px; background: #ccd0d0; }
.summary.second { margin-left: 11px; }
.form { padding: 10px 19px 0 18px; font-size: 17.500px; }
.form label { display: block; line-height: 26px; }
.form label.second { margin-top: 17px; }
.input { margin-top: 8px; height: 37px; border: 1px solid #aab7b8; border-radius: 2px; padding: 0 11px 0 13px; line-height: 34px; letter-spacing: -.255px; }
.input.fail { margin-top: 7px; height: 38px; letter-spacing: -.23px; }
.input span { display: block; white-space: nowrap; }
.adv { width: 204px; margin-top: 25px; }
.form p { margin: 6px 0 0; font-size: 15px; line-height: 24px; letter-spacing: -.34px; color: #687078; }
.next { height: 60px; background: #fafdff; }

.bottombar { height: 65px; border-top: 1px solid #e3e6e6; background: #fff; display: flex; align-items: flex-start; padding: 13px 50px 0 49px; position: relative; }
.segmented { width: 269px; height: 39px; border: 1px solid #545b64; border-radius: 2px; display: flex; align-items: center; padding-left: 4px; font-size: 17.500px; font-weight: 700; letter-spacing: -.1px; color: #545b64; white-space: nowrap; }
.sel { width: 92px; height: 30px; line-height: 28px; background: #0073bb; color: #fff; text-align: center; border-radius: 2px; }
.segmented i { width: 1px; height: 17px; background: #545b64; margin-left: 4px; }
.alt { margin: -2px 0 0 23px; line-height: 28px; }
.new { margin: 9px 0 0 10px; font-size: 15px; line-height: 21px; font-weight: 700; letter-spacing: -.75px; color: #0073bb; border-bottom: 1px dashed #0073bb; }
.save { margin-left: auto; width: 148px; height: 39px; border: 0; border-radius: 2px; background: #ff9900; color: #16191f; font-weight: 700; font-size: 17.500px; letter-spacing: -.2px; line-height: 37px; padding-bottom: 2px; }

.scroll { width: 18px; background: #fcfcfc; display: flex; flex-direction: column; align-items: center; padding: 12px 0 9px; }
.scroll .up { width: 13px; height: 10px; background: #8b8b8b; clip-path: polygon(50% 0, 100% 100%, 0 100%); }
.scroll .thumb { width: 11px; height: 110px; border-radius: 6px; background: #8b8b8b; margin-top: 540px; }
.scroll .down { width: 13px; height: 10px; background: #8b8b8b; clip-path: polygon(0 0, 100% 0, 50% 100%); margin-top: auto; }
.rail { flex: 1; border-left: 1px solid #c8cccc; color: #545b64; }
.rail span { height: 46px; display: flex; align-items: center; justify-content: center; padding-right: 1px; }
.rail span:first-child { border-bottom: 1px solid #d5dbdb; }

.foot { height: 43px; flex: none; background: #161d26; color: #ebebf0; display: flex; align-items: center; font-size: 15px; padding: 0 19px 1px 20px; white-space: nowrap; }
.foot span { margin-bottom: 1px; }
.f1 { margin-left: 6px; }
.f2 { margin-left: 30px; letter-spacing: -.2px; }
.foot .copy { margin-left: auto; color: #b6bac2; letter-spacing: -.19px; }
.f3 { margin-left: 37px; letter-spacing: -.15px; }
.f4, .f5 { margin-left: 31px; letter-spacing: -.2px; }
.f5 { letter-spacing: -.3px; }

/* taskbar */
.taskbar { margin-top: 4px; height: 60px; flex: none; border-top: 1px solid #a9b5bd; background: linear-gradient(90deg, #d0e3ee 0, #d6e5ee 500px, #dde8ef 780px, #edf0f0 900px, #e9f2e3 1060px, #eaf0e2 1260px, #ebeee9 1480px, #f0eeef 1700px, #f1eff1 100%); display: flex; align-items: center; }
.weather { display: flex; width: 420px; height: 59px; padding-left: 24px; }
.w-icon { position: relative; width: 40px; }
.w-icon svg { margin-top: 20px; }
.w-icon b { position: absolute; left: 14px; top: 7px; width: 20px; height: 20px; border-radius: 50%; background: #c42b1c; color: #fff; font-size: 13px; line-height: 20px; font-weight: 400; text-align: center; }
.w-text { display: flex; flex-direction: column; padding-top: 8px; line-height: 20px; font-size: 15px; letter-spacing: -.3px; }
.w-text small { font-size: 15px; color: #5b666d; letter-spacing: -.2px; }
.t-search { margin-left: 18px; width: 273px; height: 39px; border-radius: 20px; background: #f3f8fb; border: 1px solid #c4d0d8; display: flex; align-items: center; padding: 0 4px 0 13px; font-size: 16.500px; letter-spacing: -.1px; color: #5a6064; }
.t-search span { margin-left: 12px; line-height: 24px; }
.dove { margin-left: auto; }
.apps { margin-left: 3px; display: flex; }
.app { width: 55px; height: 48px; display: flex; align-items: center; justify-content: center; position: relative; }
.app.active::before { content: ""; position: absolute; inset: 0 3px; border-radius: 5px; background: #fafafa; border: 1px solid #e2e6e6; }
.app > svg { position: relative; }
.app.active::after { content: ""; position: absolute; bottom: 0; width: 20px; height: 4px; border-radius: 2px; background: #0078d4; }
.app.running::after { content: ""; position: absolute; bottom: 0; width: 7px; height: 4px; border-radius: 2px; background: #868986; }
.count { position: absolute; left: 21px; top: 2px; width: 34px; height: 20px; border-radius: 8px; background: #0078d4; color: #fff; font-size: 14px; font-weight: 400; line-height: 20px; text-align: center; z-index: 1; }
.zoomapp { width: 30px; height: 30px; border-radius: 12px; background: #0b5cff; color: #fff; font-size: 10px; line-height: 27px; font-weight: 600; text-align: center; letter-spacing: -.3px; }
.tray { margin-left: auto; display: flex; align-items: center; font-size: 15px; line-height: 20px; padding-right: 25px; color: #222; }
.chev { position: relative; top: -1px; }
.lang-ind { margin-left: 25px; width: 32px; display: flex; flex-direction: column; align-items: center; letter-spacing: -.2px; color: #333; }
.wifi { margin-left: 22px; }
.mute { margin-left: 10px; }
.batt { margin-left: 10px; }
.clock { width: 96px; display: flex; flex-direction: column; text-align: right; letter-spacing: -.2px; }
</style>
